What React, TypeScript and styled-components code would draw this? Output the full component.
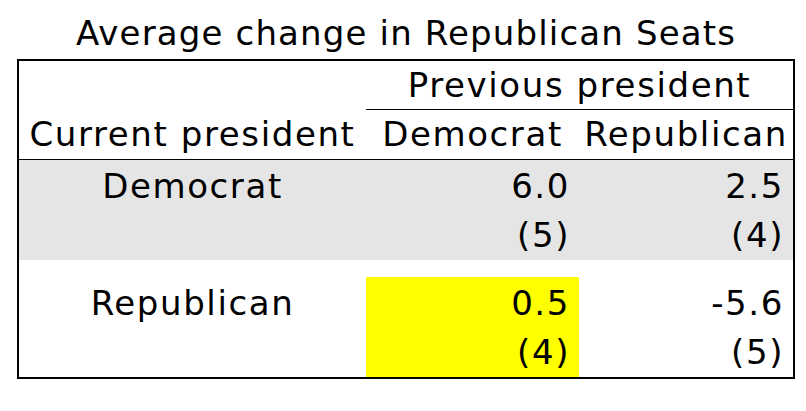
import styled, {createGlobalStyle} from 'styled-components';

type Row = {
  label: string;
  values: {mean: string; count: string; highlight?: boolean}[];
  shaded?: boolean;
};

const rows: Row[] = [
  {
    label: 'Democrat',
    shaded: true,
    values: [
      {mean: '6.0', count: '(5)'},
      {mean: '2.5', count: '(4)'},
    ],
  },
  {
    label: 'Republican',
    values: [
      {mean: '0.5', count: '(4)', highlight: true},
      {mean: '-5.6', count: '(5)'},
    ],
  },
];

const App = () => {
  return (
    <Page>
      <GlobalStyle />
      <Title>Average change in Republican Seats</Title>
      <Frame>
        <Blank />
        <GroupHead>Previous president</GroupHead>
        <HeadCell>Current president</HeadCell>
        <HeadCell>Democrat</HeadCell>
        <HeadCell>Republican</HeadCell>
        {rows.map((row, i) => (
          <RowGroup key={row.label}>
            {i > 0 && <Spacer />}
            <LabelCell $bg={row.shaded ? '#e5e5e5' : '#fff'}>{row.label}</LabelCell>
            {row.values.map((v, j) => (
              <NumCell
                key={j}
                $bg={v.highlight ? '#ffff00' : row.shaded ? '#e5e5e5' : '#fff'}
              >
                <Line>{v.mean}</Line>
                <Line>{v.count}</Line>
              </NumCell>
            ))}
          </RowGroup>
        ))}
      </Frame>
    </Page>
  );
};

export default App;

const GlobalStyle = createGlobalStyle`
  html, body {
    margin: 0;
    padding: 0;
    background: #fff;
  }
  body {
    font-family: "DejaVu Sans", "Liberation Sans", sans-serif;
    color: #000;
  }
`;

const Page = styled.div`
  width: 806px;
  height: 411px;
  padding-top: 8px;
  box-sizing: border-box;
  font-size: 34px;
  letter-spacing: 1.6px;
`;

const Title = styled.div`
  margin-left: 17px;
  width: 778px;
  height: 50px;
  line-height: 50px;
  margin-bottom: 1px;
  text-align: center;
  white-space: nowrap;
  letter-spacing: 1.15px;
`;

const Frame = styled.div`
  margin-left: 17px;
  width: 778px;
  box-sizing: border-box;
  border: 2px solid #000;
  display: grid;
  grid-template-columns: 347px 213px 214px;
`;

const RowGroup = styled.div`
  display: contents;
`;

const Blank = styled.div`
  height: 49px;
`;

const GroupHead = styled.div`
  grid-column: 2 / 4;
  height: 48px;
  line-height: 48px;
  border-bottom: 1px solid #000;
  text-align: center;
  white-space: nowrap;
`;

const HeadCell = styled.div`
  height: 49px;
  line-height: 49px;
  border-bottom: 1px solid #000;
  text-align: center;
  white-space: nowrap;
`;

const Spacer = styled.div`
  grid-column: 1 / -1;
  height: 17px;
`;

const LabelCell = styled.div<{$bg: string}>`
  background: ${p => p.$bg};
  height: 100px;
  padding-top: 2px;
  box-sizing: border-box;
  line-height: 49px;
  text-align: center;
`;

const NumCell = styled.div<{$bg: string}>`
  background: ${p => p.$bg};
  height: 100px;
  padding: 2px 9px 0 0;
  box-sizing: border-box;
  line-height: 49px;
  text-align: right;
`;

const Line = styled.div`
  white-space: nowrap;
`;
